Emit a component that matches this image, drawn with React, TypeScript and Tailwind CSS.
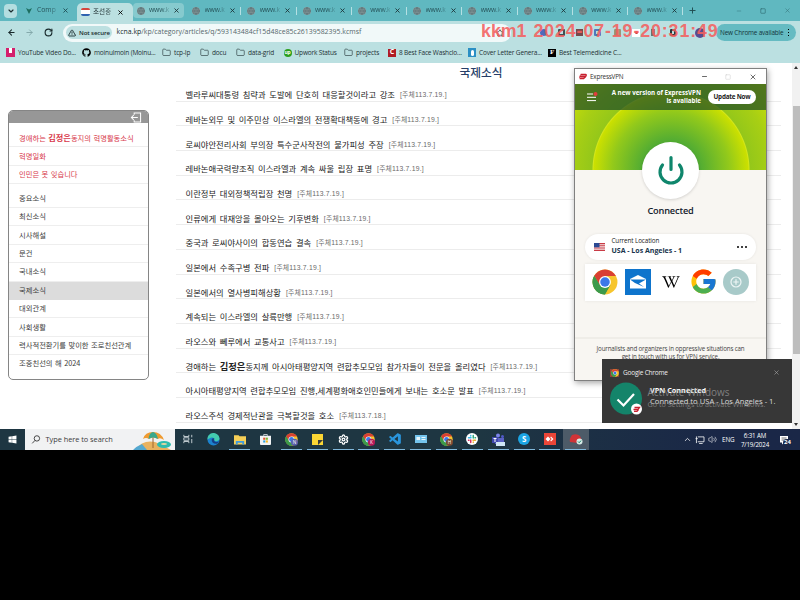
import type { ReactNode } from "react";
import { Folder, Plus, X, ChevronDown, ArrowLeft, ArrowRight, RotateCw, TriangleAlert, Settings, Search, Star, Minus, Square, Globe, ChevronUp, Volume2 } from "lucide-react";
import { FcGoogle } from "react-icons/fc";
import { FaWikipediaW, FaGithub, FaWindows } from "react-icons/fa";
import { BiLogoVisualStudio } from "react-icons/bi";

const ui = "font-['Open_Sans','Noto_Sans',sans-serif]";
const kr = "font-['Noto_Sans_CJK_KR',sans-serif]";

function Chrome({ className, badge, badgeColor = "#5b5fa8" }: { className: string; badge?: string; badgeColor?: string }) {
  return (
    <svg viewBox="0 0 48 48" className={className}>
      <circle cx="24" cy="24" r="23" fill="#f7c52d" />
      <path d="M24 24 4.1 12.5A23 23 0 0 1 43.9 12.5L44 13H24Z" fill="#d93f33" />
      <path d="M4.1 12.5A23 23 0 0 0 24 47l10-17.3H14.5Z" fill="#3c9a4b" />
      <path d="M4.1 12.5 14.5 30 24 24V13Z" fill="#d93f33" />
      <path d="M4.1 12.5 14.5 29.5 24 36 33 30 23.5 47A23 23 0 0 1 4.1 12.5Z" fill="#3c9a4b" />
      <circle cx="24" cy="24" r="11" fill="#fff" />
      <circle cx="24" cy="24" r="8.8" fill="#3b78e7" />
      {badge && <circle cx="35" cy="34" r="13" fill={badgeColor} />}
      {badge && (
        <text x="35" y="40" fontSize="17" fontFamily="Open Sans" fill="#fff" textAnchor="middle">
          {badge}
        </text>
      )}
    </svg>
  );
}

function ExpressLogo({ className }: { className: string }) {
  return (
    <svg viewBox="0 0 24 18" className={className} fill="none" stroke="#c8202f" strokeWidth="4" strokeLinejoin="round">
      <path d="M5 3H20Q23 3 21 7L20 9H2" />
      <path d="M4 9H19M2 15H14L20 9" />
      <path d="M5 3 1 14" strokeWidth="2" />
    </svg>
  );
}

function WwwTab({ lit }: { lit?: boolean }) {
  return (
    <div className={lit ? "flex h-[15px] w-[51px] items-center rounded-[4px] bg-[#86cace] pl-[4px]" : "flex h-[15px] w-[55.25px] items-center pl-[5px]"}>
      <Globe className="h-[8px] w-[8px] shrink-0 rounded-full bg-[#8b9a9c] text-[#5e7679]" strokeWidth={2.5} />
      <span className="ml-[4.5px] w-[20px] overflow-hidden bg-gradient-to-r from-[#234f55] from-60% to-[#234f55]/30 bg-clip-text text-[6.8px] tracking-[-0.2px] whitespace-nowrap text-transparent">www.k</span>
      <X className="ml-[4px] h-[7px] w-[7px] shrink-0 text-[#1d3538]" strokeWidth={3} />
      {!lit && <i className="mr-[1px] ml-auto h-[8px] w-[1px] bg-[#b5e0e3]" />}
    </div>
  );
}

function TabStrip() {
  return (
    <div className="flex h-[21px] items-center bg-[#60b8c0]">
      <div className="ml-[4px] flex h-[14px] w-[13px] items-center justify-center rounded-[4px] bg-[#b4dee0]">
        <ChevronDown className="h-[8px] w-[8px] text-[#1c2d2e]" strokeWidth={3.5} />
      </div>
      <svg viewBox="0 0 8 8" className="ml-[8px] h-[8px] w-[8px]">
        <path d="M1 1 4 7 7 1 4 2.5Z" fill="#1d6e5f" />
      </svg>
      <span className="ml-[4px] w-[20px] bg-gradient-to-r from-[#234f55] from-60% to-[#234f55]/30 bg-clip-text text-[6.8px] whitespace-nowrap text-transparent">Comp</span>
      <X className="ml-[4.5px] h-[7px] w-[7px] text-[#1d4d52]" strokeWidth={3} />
      <div className="ml-[8px] flex h-[18px] w-[56px] items-center self-end rounded-t-[5px] bg-[#bbe0e1] pl-[4px]">
        <div className="flex h-[8px] w-[9px] items-center justify-center rounded-[2px] border-t-2 border-b-2 border-t-[#d6453d] border-b-[#2f62b0] bg-white" />
        <span className={`ml-[3.5px] w-[20px] overflow-hidden bg-gradient-to-r from-[#1b2b2d] from-60% to-[#1b2b2d]/30 bg-clip-text text-[6.6px] whitespace-nowrap text-transparent ${kr}`}>조선중</span>
        <X className="ml-[4px] h-[7px] w-[7px] text-black" strokeWidth={3} />
      </div>
      <div className="flex items-center">
        <WwwTab lit />
        <div className="w-[3.500px]" />
        {Array.from({ length: 9 }, (_, i) => (
          <WwwTab key={i} />
        ))}
      </div>
      <Plus className="ml-[4px] h-[9px] w-[9px] text-[#1f4b50]" strokeWidth={2.5} />
      <div className="mr-[9px] ml-auto flex items-center gap-[18px] text-[#37777e]">
        <Minus className="h-[6px] w-[6px]" />
        <Square className="h-[6px] w-[6px]" strokeWidth={3} />
        <X className="h-[7px] w-[7px]" />
      </div>
    </div>
  );
}

function Toolbar() {
  return (
    <div className="flex h-[22px] items-center bg-[#bbe0e1] pt-[1px] text-[#17282a]">
      <ArrowLeft className="ml-[7px] h-[9px] w-[9px]" strokeWidth={2.8} />
      <ArrowRight className="ml-[9px] h-[9px] w-[9px] text-[#80a5a8]" strokeWidth={2.5} />
      <RotateCw className="ml-[10px] h-[9px] w-[9px]" strokeWidth={3} />
      <div className="ml-[10px] flex h-[18px] w-[448px] items-center rounded-full bg-[#f1f9f9] text-[7px]">
        <div className="ml-[3px] flex h-[13px] w-[46px] items-center justify-center gap-[3px] rounded-full bg-[#bde0e1]">
          <TriangleAlert className="h-[8px] w-[8px]" strokeWidth={2.5} />
          <span className="text-[6.1px] font-semibold tracking-[-0.1px] whitespace-nowrap">Not secure</span>
        </div>
        <span className="ml-[4.5px] text-[6.9px] tracking-[0.02px] whitespace-nowrap text-[#54666a]">
          <span className="text-[#12292c]">kcna.kp</span>/kp/category/articles/q/593143484cf15d48ce85c26139582395.kcmsf
        </span>
        <Star className="mr-[7px] ml-auto h-[8px] w-[8px]" />
      </div>
      <div className="ml-[29px] flex items-center gap-[11px]">
        <div className="h-[7px] w-[7px] rounded-full bg-[#5069bb]" />
        <div className="h-[7px] w-[7px] rounded-[1px] border-2 border-[#3f4e53]" />
        <div className="h-[7px] w-[7px] bg-[#77484b]" />
        <div className="h-[7px] w-[7px] rounded-[1px] border-2 border-[#4e79bd]" />
        <div className="ml-[2px] h-[7px] w-[7px] rounded-[1px] bg-[#a09476]" />
        <div className="flex h-[8px] w-[8px] items-center justify-center bg-white">
          <div className="h-[3px] w-[3px] rounded-full bg-[#ce3535]" />
        </div>
        <div className="h-[7px] w-[4px] bg-[#687577]" />
        <div className="ml-[4px] h-[7px] w-[6px] rounded-[1px] border-2 border-[#263638]" />
        <div className="ml-[8px] h-[10px] w-[10px] rounded-full bg-[#584b93]" />
      </div>
      <div className="mr-[4px] ml-auto flex h-[17px] w-[80px] items-center rounded-full bg-[#65bbc2] pl-[4px]">
        <span className="text-[6.4px] tracking-[-0.17px] whitespace-nowrap text-[#123539]">New Chrome available</span>
        <div className="mr-[7px] ml-auto flex flex-col gap-[1.5px]">
          <i className="h-[1.5px] w-[1.5px] bg-black" />
          <i className="h-[1.5px] w-[1.5px] bg-black" />
          <i className="h-[1.5px] w-[1.5px] bg-black" />
        </div>
      </div>
    </div>
  );
}

function Bookmark({ icon, label, className }: { icon: ReactNode; label: string; className: string }) {
  return (
    <div className={`flex shrink-0 items-center gap-[3px] whitespace-nowrap ${className}`}>
      {icon}
      <span>{label}</span>
    </div>
  );
}

function Bookmarks() {
  const folder = <Folder className="h-[9px] w-[9px] shrink-0 text-[#3d5154]" strokeWidth={2} />;
  return (
    <div className="flex h-[20px] items-center bg-[#bbe0e1] pb-[1px] pl-[6px] text-[6.5px] tracking-[-0.16px] text-[#1e3133]">
      <Bookmark className="w-[76px]" label="YouTube Video Do..." icon={<span className="flex h-[9px] w-[9px] items-start justify-center bg-[#d51f6c]"><i className="h-[5px] w-[3px] bg-white" /></span>} />
      <Bookmark className="w-[80px]" label="moinulmoin (Moinu..." icon={<FaGithub className="h-[9px] w-[9px] text-black" />} />
      <Bookmark className="w-[38px]" label="tcp-Ip" icon={folder} />
      <Bookmark className="w-[36px]" label="docu" icon={folder} />
      <Bookmark className="w-[47.500px]" label="data-grid" icon={folder} />
      <Bookmark className="w-[60.500px]" label="Upwork Status" icon={<span className="flex h-[8px] w-[8px] items-center justify-center rounded-full bg-[#2c9f1d] text-[5px] font-bold text-white">up</span>} />
      <Bookmark className="w-[44px]" label="projects" icon={folder} />
      <Bookmark className="w-[80px]" label="8 Best Face Washclo..." icon={<span className="flex h-[8px] w-[8px] items-center justify-center bg-[#b01c24] text-[7px] font-bold text-white">C</span>} />
      <Bookmark className="w-[80px]" label="Cover Letter Genera..." icon={<span className="flex h-[9px] w-[8px] items-center justify-center bg-[#2b8fc4]"><i className="h-[6px] w-[3px] rounded-full bg-white" /></span>} />
      <Bookmark className="w-[80px]" label="Best Telemedicine C..." icon={<span className="flex h-[8px] w-[8px] items-center justify-center bg-black font-['Liberation_Serif',serif] text-[7px] font-bold text-white">F</span>} />
    </div>
  );
}

const redLinks: ReactNode[] = [
  <>
    경애하는 <b className="text-[8.2px]">김정은</b>동지의 혁명활동소식
  </>,
  "혁명일화",
  "인민은 못 잊습니다",
];
const links = ["중요소식", "최신소식", "시사해설", "문건", "국내소식", "국제소식", "대외관계", "사회생활", "력사적전환기를 맞이한 조로친선관계", "조중친선의 해 2024"];

function Sidebar() {
  return (
    <div className={`mt-[47px] ml-[8px] h-[270px] w-[141px] shrink-0 overflow-hidden rounded-[5px] border border-[#858585] bg-white text-[7.3px] [word-spacing:0.8px] ${kr}`}>
      <div className="flex h-[12px] items-center justify-end bg-[#979797] pr-[6px]">
        <svg viewBox="0 0 12 12" className="h-[11px] w-[12px]" fill="none" stroke="#fff" strokeWidth="1.1">
          <path d="M4 3V1H11V11H4V9M8 6H1M3.5 3.5 1 6 3.5 8.5" />
        </svg>
      </div>
      <div className="mt-[6px]">
        {redLinks.map((l, i) => (
          <div key={i} className="flex h-[18.4px] items-center border-b border-[#eeeeee] pl-[10px] whitespace-nowrap text-[#d8394c]">
            <span>{l}</span>
          </div>
        ))}
      </div>
      <div className="mt-[5.5px]">
        {links.map((l, i) => (
          <div key={i} className={`flex h-[18.4px] items-center border-b pl-[10px] whitespace-nowrap text-[#3c3c3c] ${i === 5 ? "border-[#dcdcdc] bg-[#dcdcdc]" : i === 9 ? "border-white" : "border-[#eeeeee]"}`}>
            <span>{l}</span>
          </div>
        ))}
      </div>
    </div>
  );
}

const articles: [ReactNode, string][] = [
  ["벨라루씨대통령 침략과 도발에 단호히 대응할것이라고 강조", "19"],
  ["레바논외무 및 이주민상 이스라엘의 전쟁확대책동에 경고", "19"],
  ["로씨야안전리사회 부의장 특수군사작전의 불가피성 주장", "19"],
  ["레바논애국력량조직 이스라엘과 계속 싸울 립장 표명", "19"],
  ["이란정부 대외정책적립장 천명", "19"],
  ["인류에게 대재앙을 몰아오는 기후변화", "19"],
  ["중국과 로씨야사이의 합동연습 결속", "19"],
  ["일본에서 수족구병 전파", "19"],
  ["일본에서의 열사병피해상황", "19"],
  ["계속되는 이스라엘의 살륙만행", "19"],
  ["라오스와 뻬루에서 교통사고", "19"],
  [
    <>
      경애하는 <b className="text-[9.3px]">김정은</b>동지께 아시아태평양지역 련합추모모임 참가자들이 전문을 올리였다
    </>,
    "19",
  ],
  ["아시아태평양지역 련합추모모임 진행,세계평화애호인민들에게 보내는 호소문 발표", "19"],
  ["라오스주석 경제적난관을 극복할것을 호소", "18"],
];

function Articles() {
  return (
    <div className={`ml-[27px] w-[605px] ${kr}`}>
      <h1 className="flex h-[14px] items-center justify-center pt-[3px] pl-[5px] text-[11.7px] leading-none font-medium text-[#263e68]">국제소식</h1>
      {articles.map(([title, day], i) => (
        <div key={i} className="flex h-[24.7px] items-end border-b border-[#ececec] pb-[0.5px] pl-[9.5px] whitespace-nowrap">
          <span className="text-[8.32px] leading-[12px] text-[#222] [word-spacing:1.8px]">{title}</span>
          <span className="ml-[5px] font-['Liberation_Sans','Noto_Sans_CJK_KR',sans-serif] text-[6.8px] leading-[11px] tracking-[0.2px] text-[#6a6a6a]">[주체113.7.{day}.]</span>
        </div>
      ))}
    </div>
  );
}

function VpnWindow() {
  return (
    <div className={`absolute top-[68px] left-[574px] flex h-[313px] w-[193px] flex-col overflow-hidden border border-[#808080] bg-[#f8f6f2] shadow-[1px_2px_6px_rgba(0,0,0,0.35)] ${ui}`}>
      <div className="flex h-[15px] shrink-0 items-center bg-white pl-[4px] text-[6.4px] tracking-[-0.22px] text-[#333]">
        <ExpressLogo className="mr-[3px] h-[7px] w-[8px]" />
        ExpressVPN
        <Minus className="ml-auto h-[7px] w-[7px] text-black" />
        <Square className="ml-[17px] h-[6px] w-[6px] text-[#ccc]" />
        <X className="mr-[9px] ml-[18px] h-[8px] w-[8px] text-[#222]" />
      </div>
      <div className="h-[86px] shrink-0 bg-[radial-gradient(circle_at_96px_86px,#46a83b_0,#54ad32_30px,#92c91b_58px,#cbe000_77px,#d4e61c_78px,#94c71a_79px,#a8cf14_100px,#cce005_125px)]">
        <div className="flex h-[26px] items-center bg-[#1c4a27]/70">
          <svg viewBox="0 0 12 10" className="ml-[11px] h-[10px] w-[12px]">
            <path d="M1 2H7M1 5.3H10M1 8.6H10" stroke="#fff" strokeWidth="1" />
            <circle cx="9.5" cy="2" r="2" fill="#e23d3d" />
          </svg>
          <div className="ml-[8px] w-[95px] text-right text-[6.2px] leading-[8.3px] font-bold text-white">
            A new version of ExpressVPN is available
          </div>
          <div className="ml-[7px] flex h-[14px] w-[48px] items-center justify-center rounded-full bg-white text-[6.3px] font-bold tracking-[-0.22px] whitespace-nowrap text-[#222]">Update Now</div>
        </div>
      </div>
      <div className="z-10 mt-[-28.5px] ml-[67px] flex h-[57px] w-[57px] shrink-0 items-center justify-center rounded-full bg-white shadow-[0_1px_3px_rgba(0,0,0,0.15)]">
        <svg viewBox="0 0 28 30" className="h-[30px] w-[28px]" fill="none" stroke="#0f866c" strokeWidth="3.2" strokeLinecap="round">
          <path d="M14 2.5V14.5M5.5 10A11 11 0 1 0 22.5 10" />
        </svg>
      </div>
      <div className="mt-[4px] h-[15px] shrink-0 text-center text-[9.2px] leading-[15px] font-semibold tracking-[-0.16px] text-[#12202b]">Connected</div>
      <div className="mx-[10px] mt-[16.5px] flex h-[26px] shrink-0 items-center rounded-full bg-white shadow-[0_0_3px_rgba(0,0,0,0.08)]">
        <svg viewBox="0 0 11 8" className="ml-[9px] h-[8px] w-[11px]">
          <rect width="11" height="8" fill="#f4e9e9" />
          <path d="M0 .6H11M0 2.8H11M0 5H11M0 7.4H11" stroke="#c93b46" strokeWidth="1.1" />
          <rect width="5.5" height="4.3" fill="#2b4a94" />
        </svg>
        <div className="ml-[6.5px] mt-[-2px]">
          <div className="text-[6.3px] leading-[10px] tracking-[-0.1px] text-[#222]">Current Location</div>
          <div className="text-[7px] leading-[10px] font-bold text-[#17344c]">USA - Los Angeles - 1</div>
        </div>
        <div className="mt-[-1px] mr-[9px] ml-auto flex gap-[2px]">
          <i className="h-[2px] w-[2px] rounded-full bg-black" />
          <i className="h-[2px] w-[2px] rounded-full bg-black" />
          <i className="h-[2px] w-[2px] rounded-full bg-black" />
        </div>
      </div>
      <div className="mx-[10px] mt-[4px] flex h-[37px] shrink-0 items-center bg-white pb-[2px] pl-[7px] shadow-[0_0_3px_rgba(0,0,0,0.08)]">
        <Chrome className="h-[26px] w-[26px]" />
        <svg viewBox="0 0 26 26" className="ml-[7px] h-[26px] w-[26px]">
          <rect width="26" height="26" fill="#0e74cc" />
          <path d="M5 10 13 6 21 10V19.500H5Z" fill="#fff" />
          <path d="M5 10.500H21L14 14.500 19 18 10 14Z" fill="#0e74cc" />
        </svg>
        <span className="ml-[6.500px] flex w-[26px] justify-center">
          <FaWikipediaW className="h-[18px] w-[18px] text-black" />
        </span>
        <FcGoogle className="ml-[5px] h-[29px] w-[29px]" />
        <svg viewBox="0 0 26 26" className="ml-[5px] h-[26px] w-[26px]" fill="none" stroke="#edf5f5" strokeWidth="1.2">
          <circle cx="13" cy="13" r="13" fill="#a8cac9" stroke="none" />
          <circle cx="13" cy="13" r="5" />
          <path d="M10.3 13H15.7M13 10.3V15.7" />
        </svg>
      </div>
      <div className="mt-[36px] flex-1 border-t-2 border-[#efede8] pt-[5.5px] text-center text-[6.2px] leading-[8.3px] tracking-[-0.15px] whitespace-nowrap text-[#444]">
        Journalists and organizers in oppressive situations can
        <br />
        get in touch with us for VPN service.
      </div>
    </div>
  );
}

function Toast() {
  return (
    <div className={`absolute top-[359px] left-[602px] h-[63.5px] w-[190px] bg-[#373737] text-[7.2px] text-white ${ui}`}>
      <div className="flex h-[27px] items-center pl-[8px]">
        <span className="flex h-[8px] w-[9px] items-center justify-center bg-[#8d4238]">
          <Chrome className="h-[8px] w-[8px]" />
        </span>
        <span className="ml-[4px] text-[6.5px] tracking-[-0.2px] text-[#eee]">Google Chrome</span>
        <X className="mr-[12px] ml-auto h-[7px] w-[7px] text-[#aaa]" />
      </div>
      <div className="flex pl-[8px]">
        <svg viewBox="0 0 34 34" className="mt-[-4px] h-[34px] w-[34px]">
          <circle cx="16" cy="16.5" r="16" fill="#14846a" />
          <path d="m7.500 17.500 6 6L24 12" fill="none" stroke="#fff" strokeWidth="2.200" />
          <circle cx="26.5" cy="27" r="5.5" fill="#fff" />
          <path d="M24.5 25.5H29.5L28 27.5H23.5M24 29.3H27L28.5 27.5" fill="none" stroke="#c8202f" strokeWidth="1.3" />
        </svg>
        <div className="mt-[-1px] ml-[6px] leading-[10.5px] whitespace-nowrap">
          <div className="text-[7.3px] font-bold">VPN Connected</div>
          <div className="text-[7.6px] tracking-[0.02px] text-[#ddd]">Connected to USA - Los Angeles - 1.</div>
        </div>
      </div>
      <div className="absolute top-[26px] left-[45.5px] whitespace-nowrap text-[#9a9a9a]/75">
        <div className="text-[10px] leading-[14px]">Activate Windows</div>
        <div className="text-[7.2px] leading-[10px]">Go to Settings to activate Windows.</div>
      </div>
    </div>
  );
}

function Scrollbar() {
  return (
    <div className="ml-auto flex w-[8px] flex-col items-center bg-[#f1f1f1]">
      <div className="mt-[3px] h-[3px] w-[4px] bg-[#333] [clip-path:polygon(50%_0,100%_100%,0_100%)]" />
      <div className="mt-[37px] h-[248px] w-[7px] bg-[#bdbdbd]" />
      <div className="mt-auto mb-[3px] h-[3px] w-[4px] bg-[#333] [clip-path:polygon(0_0,100%_0,50%_100%)]" />
    </div>
  );
}

function AppButton({ children, open, active }: { children: ReactNode; open?: boolean; active?: boolean }) {
  return (
    <div className={`flex h-[21px] w-[25.87px] items-center justify-center ${active ? "bg-[#4d5b68]" : ""}`}>
      <div className={`flex h-[21px] w-[21px] items-center justify-center border-b ${open ? "border-[#81b9dc]" : "border-transparent"}`}>{children}</div>
    </div>
  );
}

function Taskbar() {
  return (
    <div className={`flex h-[21px] items-center bg-gradient-to-r from-[#1e3642] from-60% to-[#1a2747] to-90% text-white ${ui}`}>
      <FaWindows className="ml-[8px] h-[9px] w-[9px]" />
      <div className="ml-[8px] flex h-[21px] w-[150px] items-center bg-[#f1f2f3] pl-[6px]">
        <svg viewBox="0 0 10 10" className="h-[9px] w-[10px]" fill="none" stroke="#222" strokeWidth="0.9">
          <circle cx="6" cy="3.800" r="3" />
          <path d="M3.900 6 .8 9.300" />
        </svg>
        <span className="ml-[4.500px] text-[7.4px] tracking-[-0.04px] whitespace-nowrap text-[#3c3c3c]">Type here to search</span>
        <svg viewBox="0 0 42 20" className="ml-auto h-[20px] w-[42px]">
          <path d="M2 20Q12 7 27 14L38 20Z" fill="#e8b260" />
          <path d="M0 20Q4 16 9 14L14 20Z" fill="#54a8d0" />
          <path d="M20 4V18" stroke="#a0642e" />
          <path d="M10 9Q12 2 20 2Q28 2 31 10Q27 7 25 9Q20 6 16 9Q13 7 10 9Z" fill="#ef9b31" />
          <path d="M15.5 9Q16 3 20 2Q24 3 25 9Q20 6 15.5 9Z" fill="#3aa88c" />
          <ellipse cx="31" cy="14.5" rx="7" ry="3.5" fill="#2fbcae" />
          <ellipse cx="31" cy="14" rx="3" ry="1" fill="#e7d6a0" />
        </svg>
      </div>
      <AppButton>
        <svg viewBox="0 0 12 12" className="h-[10px] w-[10px]" fill="none" stroke="#dce4e8" strokeWidth="1">
          <path d="M1 1V3H7V1M1 11V9H7V11M1 4.5H7V7.5H1ZM10.5 1V4M10.5 6V11" />
        </svg>
      </AppButton>
      <AppButton>
        <svg viewBox="0 0 14 14" className="h-[13px] w-[13px]">
          <circle cx="7" cy="7" r="6.5" fill="#1b83cf" />
          <path d="M.5 7A6.5 6.5 0 0 1 13.5 6Q13 9 9 9L8 8Q8 4 4 5Q1.500 6 .5 7Z" fill="#43cbb0" />
          <path d="M5 7Q5 12 11 11.500Q12.500 10 13 9Q10 10.500 8 9Q7 7 8 6Q6 5 5 7Z" fill="#153f86" />
        </svg>
      </AppButton>
      <AppButton open>
        <svg viewBox="0 0 13 11" className="h-[11px] w-[12px]">
          <path d="M0 1H5L6 2H13V11H0Z" fill="#f5cf57" />
          <path d="M2 11V7H11V11H9V9H4V11Z" fill="#3d9be0" />
        </svg>
      </AppButton>
      <AppButton>
        <svg viewBox="0 0 12 12" className="h-[11px] w-[11px]">
          <path d="M0 2H12V11Q12 12 11 12H1Q0 12 0 11Z" fill="#f2f4f5" />
          <path d="M4 2V.6H8V2" fill="none" stroke="#cfd8dc" />
          <rect x="3.500" y="4" width="2.300" height="2.300" fill="#e4502c" />
          <rect x="6.300" y="4" width="2.300" height="2.300" fill="#7db92f" />
          <rect x="3.500" y="7" width="2.300" height="2.300" fill="#2b9fe0" />
          <rect x="6.300" y="7" width="2.300" height="2.300" fill="#f5b81e" />
        </svg>
      </AppButton>
      <AppButton open>
        <Chrome className="h-[13px] w-[13px]" badge="N" />
      </AppButton>
      <AppButton open>
        <svg viewBox="0 0 11 11" className="h-[11px] w-[11px]">
          <path d="M0 0H11V11H0Z" fill="#fbd634" />
          <path d="M6 11V6H11Z" fill="#3b3b3b" />
        </svg>
      </AppButton>
      <AppButton open>
        <Settings className="h-[11px] w-[11px]" strokeWidth={2.8} />
      </AppButton>
      <AppButton open>
        <Chrome className="h-[13px] w-[13px]" badge="K" badgeColor="#b5185a" />
      </AppButton>
      <AppButton open>
        <BiLogoVisualStudio className="h-[14px] w-[14px] text-[#2a95dc]" />
      </AppButton>
      <AppButton open>
        <svg viewBox="0 0 12 8" className="h-[8px] w-[12px]">
          <rect width="12" height="8" fill="#74c3ec" />
          <rect x="1.500" y="2" width="3.500" height="3" fill="#e9f6fc" />
          <path d="M6.500 2.500H10.500M6.500 4.500H10.500" stroke="#e9f6fc" />
        </svg>
      </AppButton>
      <AppButton open>
        <Chrome className="h-[13px] w-[13px]" badge="H" badgeColor="#7b4a31" />
      </AppButton>
      <AppButton open>
        <svg viewBox="0 0 24 24" className="h-[12px] w-[12px]" strokeWidth="2.800" strokeLinecap="round">
          <circle cx="12" cy="12" r="12" fill="#fff" />
          <path d="M5 9.500H10M9.500 5V6" stroke="#36b9e8" />
          <path d="M14.500 5V10M18 9.500H19" stroke="#2ba878" />
          <path d="M14 14.500H19M14.500 18V19" stroke="#e9b02f" />
          <path d="M9.500 14V19M5 14.500H6" stroke="#d9235b" />
        </svg>
      </AppButton>
      <AppButton open>
        <svg viewBox="0 0 13 13" className="h-[13px] w-[13px]">
          <circle cx="6" cy="2.500" r="2" fill="#7b83eb" />
          <circle cx="10.500" cy="3.500" r="1.500" fill="#5059c9" />
          <path d="M2 5H12V11H3Z" fill="#5b62c5" />
          <rect y="4" width="6" height="6" fill="#3f48ae" />
          <path d="M1.500 5.500H4.500M3 5.500V9" stroke="#fff" />
          <rect x="4" y="9" width="9" height="4" fill="#cfe6f5" />
        </svg>
      </AppButton>
      <AppButton open>
        <span className="flex h-[12px] w-[12px] items-center justify-center rounded-full bg-[#1ba5e4]">
          <span className="text-[8px] leading-none font-bold">S</span>
        </span>
      </AppButton>
      <AppButton open>
        <svg viewBox="0 0 12 12" className="h-[12px] w-[12px]">
          <rect width="12" height="12" fill="#ec4638" />
          <path d="M4 3.500 6.500 6 4 8.500 1.500 6ZM7 3.500 9.500 6 7 8.500 6.300 7.500 7.800 6 6.300 4.500Z" fill="#fff" />
        </svg>
      </AppButton>
      <AppButton open active>
        <svg viewBox="0 0 14 12" className="h-[12px] w-[14px]">
          <path d="M3 2Q8 0 11 3L13 8L9 10L1 9Q0 6 3 2Z" fill="#cf3337" />
          <circle cx="10.500" cy="8.500" r="3" fill="#d8ece7" />
          <path d="m9 8.500 1.200 1.200L12 7.600" fill="none" stroke="#13846b" />
        </svg>
      </AppButton>
      <ChevronUp className="ml-auto h-[9px] w-[9px]" />
      <svg viewBox="0 0 10 9" className="ml-[3px] h-[8px] w-[10px]" fill="none" stroke="#fff" strokeWidth="0.9">
        <path d="M2.500 1H9.500V6.500H2.500M4 8.500H8M1 .5V8M0 3H2.500" />
      </svg>
      <Volume2 className="ml-[3px] h-[9px] w-[9px]" strokeWidth={1.5} />
      <span className="ml-[5px] w-[14px] text-[6.300px] tracking-[-0.1px]">ENG</span>
      <span className="ml-[3px] w-[32px] text-center text-[6.200px] leading-[9px] tracking-[-0.12px] whitespace-nowrap">
        6:31 AM
        <br />
        7/19/2024
      </span>
      <span className="relative mr-[11px] ml-[8px] h-[10px] w-[10px]">
        <svg viewBox="0 0 10 10" className="h-[10px] w-[10px]">
          <path d="M1 1H9V7.500H5L3 9.500V7.500H1Z" fill="#fff" />
          <path d="M2.500 3H7.500M2.500 5H7.500" stroke="#333" strokeWidth=".7" />
        </svg>
        <span className="absolute top-[4px] left-[4px] flex h-[8px] w-[9px] items-center justify-center rounded-full bg-[#1a2747] text-[6px] font-bold">24</span>
      </span>
    </div>
  );
}

export default function App() {
  return (
    <div className={`relative h-[600px] w-[800px] overflow-hidden bg-black ${ui}`}>
      <TabStrip />
      <Toolbar />
      <Bookmarks />
      <div className="flex h-[366px] bg-white">
        <Sidebar />
        <Articles />
        <Scrollbar />
      </div>
      <Taskbar />
      <div className="absolute top-[20px] left-[481px] font-['Liberation_Sans',sans-serif] text-[17.8px] leading-[22px] font-bold whitespace-nowrap text-[#f4605f]/90">
        kkm1 <span className="ml-[2px] tracking-[0.9px]">2024-07-19-20:31:49</span>
      </div>
      <VpnWindow />
      <Toast />
    </div>
  );
}
